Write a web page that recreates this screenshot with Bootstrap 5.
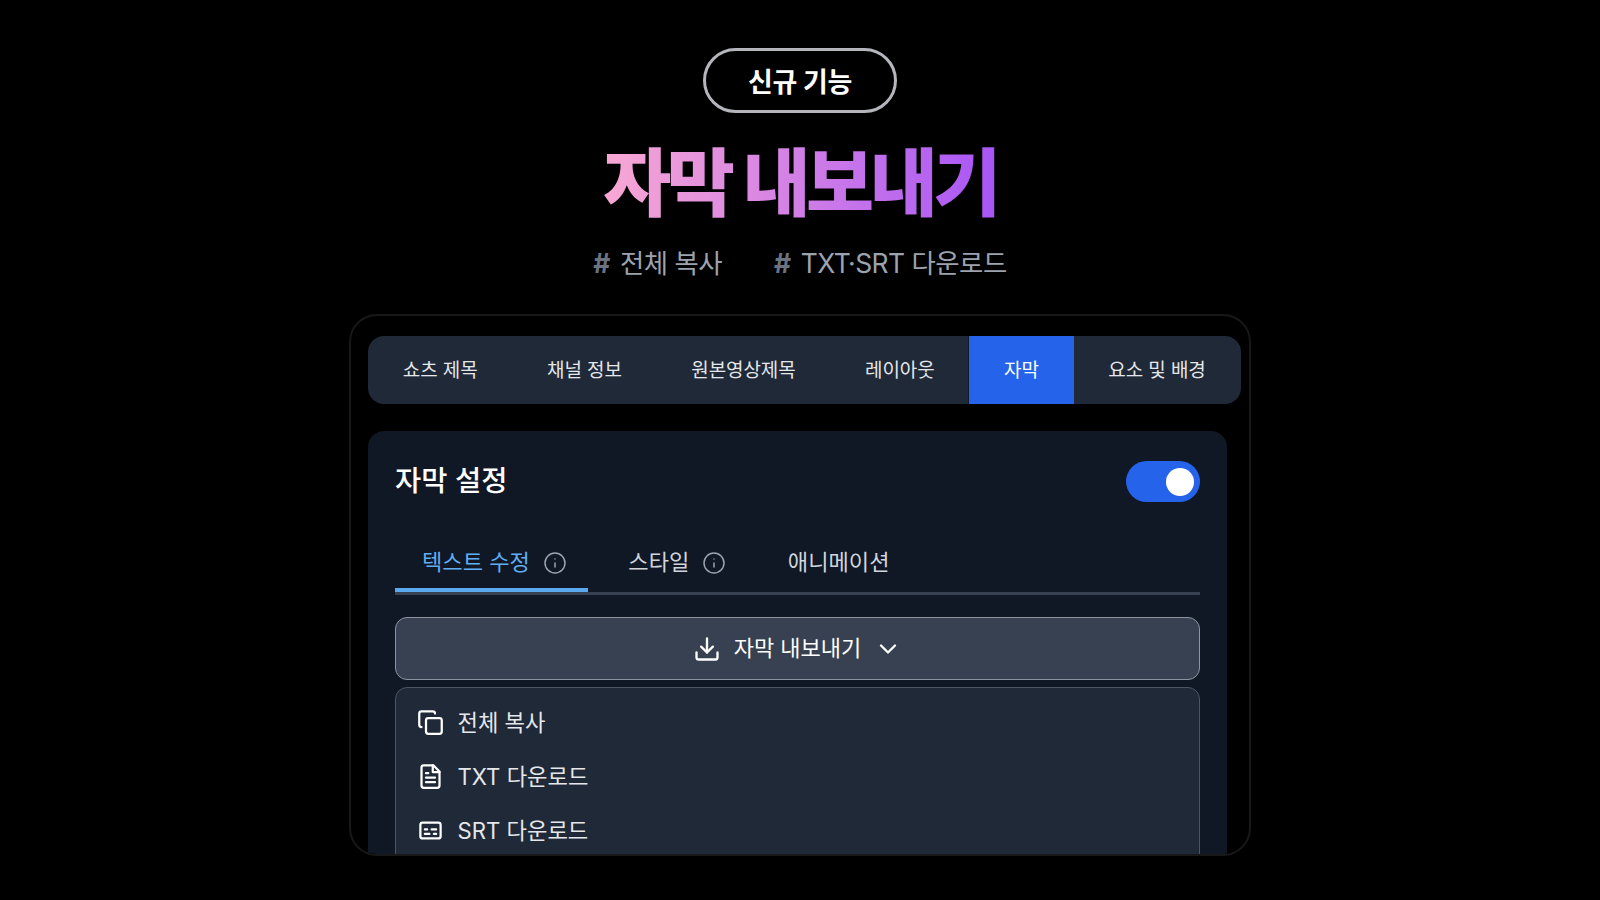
<!DOCTYPE html>
<html lang="ko">
<head>
<meta charset="utf-8">
<title>자막 내보내기</title>
<link href="https://cdn.jsdelivr.net/npm/bootstrap@5.3.0/dist/css/bootstrap.min.css" rel="stylesheet">
<style>
html,body{height:900px;overflow:hidden}
body{background:#000;color:#fff;font-family:Inter,"Noto Sans CJK KR",sans-serif}
.hero-pill{width:194px;height:65px;margin-top:48px;padding-top:5px;border:3px solid #b4b6bc;border-radius:33px;font-size:27px;font-weight:700;letter-spacing:-.4px}
.hero-title{margin:26px 0 0;height:88px;font-size:74px;line-height:88px;font-weight:900;letter-spacing:-4.5px;word-spacing:2px;background:linear-gradient(90deg,#f9a8d4,#a855f7);-webkit-background-clip:text;background-clip:text;color:transparent}
.hero-tags{margin-top:16px;height:40px;gap:52px;font-size:26.4px;line-height:40px;color:#9ca3af;letter-spacing:-.5px}
.hero-hash{color:#6b7280;font-weight:700;margin-right:10px}
.shell{width:902px;height:542px;margin-top:31px;border:2px solid #18181a;border-radius:28px;overflow:hidden;padding:20px 17px 0 17px}
.top-tabs{width:873px;height:68px;background:#1f2937;border-radius:16px;overflow:hidden;flex-wrap:nowrap}
.top-tab{padding:2px 34.75px 0;display:flex;align-items:center;color:#e5e7eb;font-size:19px;letter-spacing:-.1px;white-space:nowrap}
.top-tab.is-on{background:#2563eb;color:#fff;box-shadow:-1px 0 0 #111827}
.panel{width:859px;height:500px;margin-top:27px;background:#101725;border-radius:16px;padding:28px 27px 0 27px}
.panel-title{font-size:28.5px;font-weight:500;margin:0}
.panel-head{height:41px;margin-top:2px}
.switcher{width:74px;height:41px;background:#2563eb;border-radius:21px;padding-right:6px}
.switcher i{display:block;width:28px;height:28px;background:#fff;border-radius:50%}
.sub-tabs{margin-top:36px;height:57px;border-bottom:3px solid #374151;gap:13.5px}
.sub-tab{position:relative;height:54px;padding:0 21px 4px 27px;display:flex;align-items:center;gap:13px;font-size:22.1px;color:#d1d5db;white-space:nowrap}
.sub-tab svg{width:24px;height:24px;stroke:#9ca3af;stroke-width:1.5}
.sub-tab.is-on{color:#60aef5}
.sub-tab.is-on::after{content:"";position:absolute;left:0;right:0;bottom:0;height:4px;background:#5aa9ef}
.export-btn{width:805px;height:63px;margin-top:22px;background:#374151;border:1.5px solid #8d95a3;border-radius:12px;color:#fff;font-size:22px;gap:13px}
.export-btn:hover{background:#374151;color:#fff;border-color:#8d95a3}
.icn{fill:none;stroke:#fff;stroke-width:2;stroke-linecap:round;stroke-linejoin:round;width:28px;height:28px;flex:none}
.export-list{width:805px;height:300px;margin-top:7px;background:#1f2937;border:1.5px solid #4b5563;border-radius:12px;padding:7.5px 0 0 20.5px}
.export-list .icn{width:27px;height:27px}
.export-item{height:54px;display:flex;align-items:center;gap:14px;font-size:22.2px;color:#e5e7eb}
</style>
</head>
<body class="d-flex flex-column align-items-center">
<div class="hero-pill d-flex align-items-center justify-content-center">신규 기능</div>
<h1 class="hero-title">자막 내보내기</h1>
<div class="hero-tags d-flex">
  <span><span class="hero-hash">#</span>전체 복사</span>
  <span><span class="hero-hash">#</span>TXT·SRT 다운로드</span>
</div>
<div class="shell">
  <nav class="nav top-tabs">
    <a class="top-tab text-decoration-none">쇼츠 제목</a>
    <a class="top-tab text-decoration-none">채널 정보</a>
    <a class="top-tab text-decoration-none">원본영상제목</a>
    <a class="top-tab text-decoration-none">레이아웃</a>
    <a class="top-tab text-decoration-none is-on">자막</a>
    <a class="top-tab text-decoration-none">요소 및 배경</a>
  </nav>
  <section class="panel">
    <div class="panel-head d-flex align-items-center justify-content-between">
      <h2 class="panel-title">자막 설정</h2>
      <div class="switcher d-flex align-items-center justify-content-end"><i></i></div>
    </div>
    <div class="sub-tabs d-flex">
      <div class="sub-tab is-on">텍스트 수정
        <svg class="icn" viewBox="0 0 24 24"><circle cx="12" cy="12" r="10"/><path d="M12 16v-4"/><path d="M12 8h.01"/></svg>
      </div>
      <div class="sub-tab">스타일
        <svg class="icn" viewBox="0 0 24 24"><circle cx="12" cy="12" r="10"/><path d="M12 16v-4"/><path d="M12 8h.01"/></svg>
      </div>
      <div class="sub-tab">애니메이션</div>
    </div>
    <button class="btn export-btn d-flex align-items-center justify-content-center" type="button">
      <svg class="icn" viewBox="0 0 24 24"><path d="M21 15v4a2 2 0 0 1-2 2H5a2 2 0 0 1-2-2v-4"/><polyline points="7 10 12 15 17 10"/><line x1="12" y1="15" x2="12" y2="3"/></svg>
      <span>자막 내보내기</span>
      <svg class="icn" viewBox="0 0 24 24"><polyline points="6 9 12 15 18 9"/></svg>
    </button>
    <div class="export-list">
      <div class="export-item">
        <svg class="icn" viewBox="0 0 24 24"><rect x="8" y="8" width="14" height="14" rx="2"/><path d="M4 16c-1.1 0-2-.9-2-2V4c0-1.1.9-2 2-2h10c1.1 0 2 .9 2 2"/></svg>전체 복사
      </div>
      <div class="export-item">
        <svg class="icn" viewBox="0 0 24 24"><path d="M14.5 2H6a2 2 0 0 0-2 2v16a2 2 0 0 0 2 2h12a2 2 0 0 0 2-2V7.5L14.5 2z"/><polyline points="14 2 14 8 20 8"/><line x1="16" y1="13" x2="8" y2="13"/><line x1="16" y1="17" x2="8" y2="17"/><line x1="10" y1="9" x2="8" y2="9"/></svg>TXT 다운로드
      </div>
      <div class="export-item">
        <svg class="icn" viewBox="0 0 24 24"><rect x="3" y="5" width="18" height="14" rx="2"/><path d="M7 15h4M15 15h2M7 11h2M13 11h4"/></svg>SRT 다운로드
      </div>
    </div>
  </section>
</div>
<script src="https://cdn.jsdelivr.net/npm/bootstrap@5.3.0/dist/js/bootstrap.bundle.min.js"></script>
</body>
</html>
